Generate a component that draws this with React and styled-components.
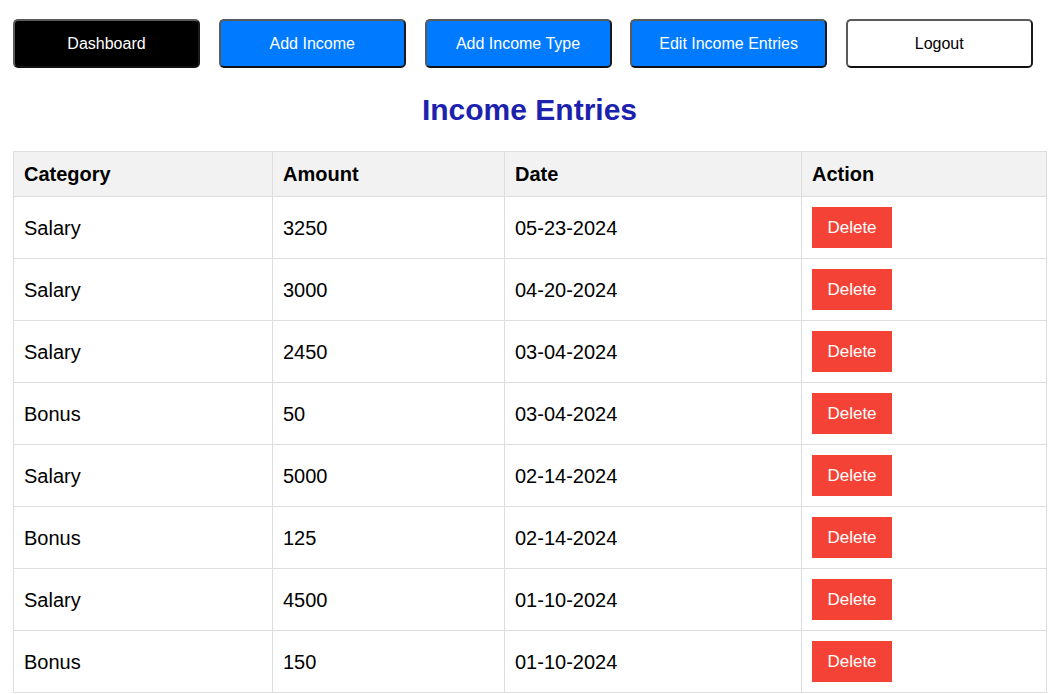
import React from "react";
import styled, { createGlobalStyle } from "styled-components";

const GlobalStyle = createGlobalStyle`
  html, body { margin: 0; padding: 0; background: #fff; }
  body { font-family: "Liberation Sans", Arial, sans-serif; color: #000; }
`;

const Page = styled.div`
  padding: 19px 16px 0 13px;
`;

const Nav = styled.nav`
  display: flex;
  gap: 18.75px;
`;

const variants = {
  dark: { bg: "#000", fg: "#fff" },
  primary: { bg: "#007bff", fg: "#fff" },
  light: { bg: "#fff", fg: "#000" },
};

const NavButton = styled.button`
  box-sizing: border-box;
  min-width: 187px;
  height: 49px;
  padding: 0 ${(p) => (p.$wide ? 27 : 24)}px;
  border-width: 2px;
  border-style: solid;
  border-color: #5a5a5a #1a1a1a #111 #5a5a5a;
  border-radius: 5px;
  background: ${(p) => variants[p.$variant].bg};
  color: ${(p) => variants[p.$variant].fg};
  font-family: "Liberation Sans", Arial, sans-serif;
  font-size: 16px;
  white-space: nowrap;
  cursor: pointer;
`;

const Title = styled.h2`
  margin: 25px 0 24px;
  text-align: center;
  font-size: 30px;
  font-weight: bold;
  color: #1c22ad;
  line-height: 34px;
`;

const Table = styled.table`
  width: 100%;
  table-layout: fixed;
  border-collapse: collapse;
  font-size: 20px;
`;

const Th = styled.th`
  text-align: left;
  background: #f2f2f2;
  border: 1px solid #ddd;
  padding: 10px;
  line-height: 24px;
  font-weight: bold;
`;

const Td = styled.td`
  border: 1px solid #ddd;
  padding: 10px;
  line-height: 24px;
  vertical-align: middle;
`;

const DeleteButton = styled.button`
  display: block;
  box-sizing: border-box;
  width: 80px;
  height: 41px;
  border: none;
  background: #f44336;
  color: #fff;
  font-family: "Liberation Sans", Arial, sans-serif;
  font-size: 17px;
  cursor: pointer;
`;

const columns = [
  ["Category", 259],
  ["Amount", 232],
  ["Date", 297],
  ["Action", 245],
];

const entries = [
  ["Salary", "3250", "05-23-2024"],
  ["Salary", "3000", "04-20-2024"],
  ["Salary", "2450", "03-04-2024"],
  ["Bonus", "50", "03-04-2024"],
  ["Salary", "5000", "02-14-2024"],
  ["Bonus", "125", "02-14-2024"],
  ["Salary", "4500", "01-10-2024"],
  ["Bonus", "150", "01-10-2024"],
];

export default function App() {
  return (
    <Page>
      <GlobalStyle />
      <Nav>
        <NavButton $variant="dark">Dashboard</NavButton>
        <NavButton $variant="primary">Add Income</NavButton>
        <NavButton $variant="primary">Add Income Type</NavButton>
        <NavButton $variant="primary" $wide>Edit Income Entries</NavButton>
        <NavButton $variant="light">Logout</NavButton>
      </Nav>
      <Title>Income Entries</Title>
      <Table>
        <colgroup>
          {columns.map(([name, w]) => (
            <col key={name} style={{ width: w }} />
          ))}
        </colgroup>
        <thead>
          <tr>
            {columns.map(([name]) => (
              <Th key={name}>{name}</Th>
            ))}
          </tr>
        </thead>
        <tbody>
          {entries.map(([cat, amt, date], i) => (
            <tr key={i}>
              <Td>{cat}</Td>
              <Td>{amt}</Td>
              <Td>{date}</Td>
              <Td>
                <DeleteButton>Delete</DeleteButton>
              </Td>
            </tr>
          ))}
        </tbody>
      </Table>
    </Page>
  );
}
